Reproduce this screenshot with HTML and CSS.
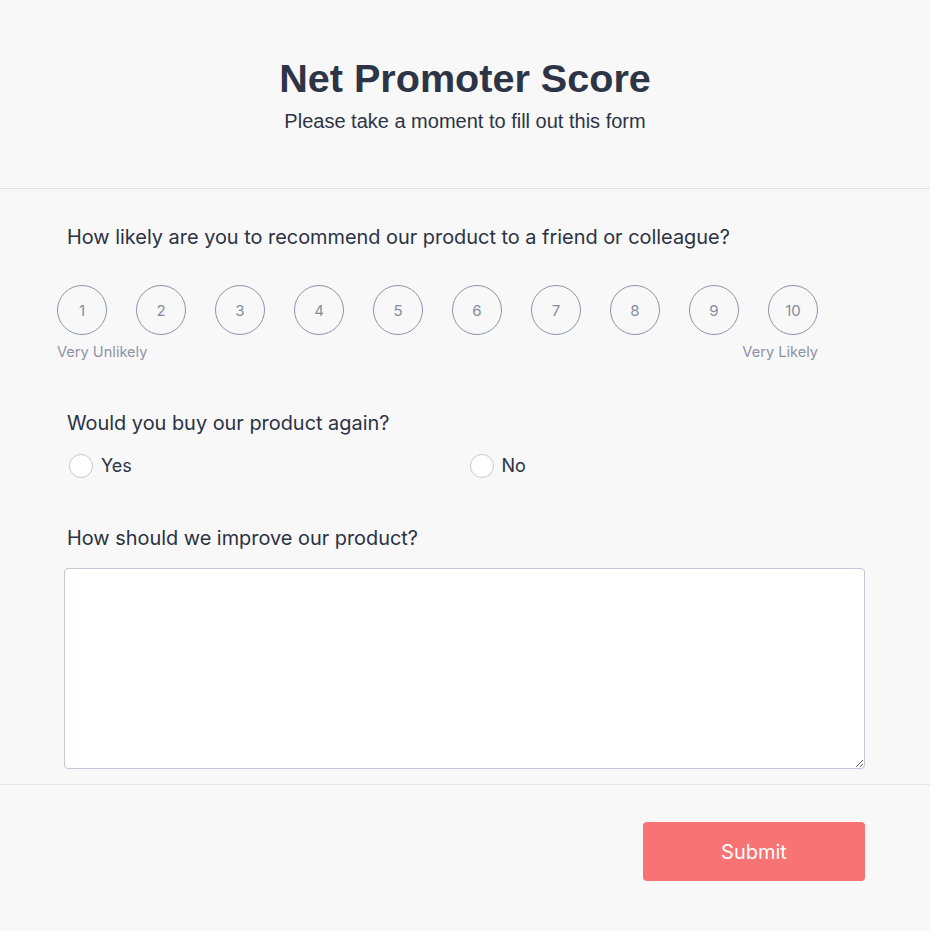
FILE: index.html
```html
<!DOCTYPE html>
<html lang="en">
<head>
  <meta charset="UTF-8">
  <meta name="viewport" content="width=device-width, initial-scale=1.0">
  <title>Net Promoter Score</title>
  <link rel="stylesheet" href="styles.css">
</head>
<body>
  <form class="survey" action="">
    <header class="survey-header">
      <h1>Net Promoter Score</h1>
      <p>Please take a moment to fill out this form</p>
    </header>

    <div class="survey-body">
      <div class="question question-nps">
        <label class="question-label">How likely are you to recommend our product to a friend or colleague?</label>
        <div class="scale">
          <button type="button" class="scale-item">1</button>
          <button type="button" class="scale-item">2</button>
          <button type="button" class="scale-item">3</button>
          <button type="button" class="scale-item">4</button>
          <button type="button" class="scale-item">5</button>
          <button type="button" class="scale-item">6</button>
          <button type="button" class="scale-item">7</button>
          <button type="button" class="scale-item">8</button>
          <button type="button" class="scale-item">9</button>
          <button type="button" class="scale-item">10</button>
        </div>
        <div class="scale-legend">
          <span>Very Unlikely</span>
          <span>Very Likely</span>
        </div>
      </div>

      <div class="question">
        <label class="question-label">Would you buy our product again?</label>
        <div class="choices">
          <label class="choice"><input type="radio" name="again" value="yes"> Yes</label>
          <label class="choice"><input type="radio" name="again" value="no"> No</label>
        </div>
      </div>

      <div class="question">
        <label class="question-label" for="improve">How should we improve our product?</label>
        <textarea id="improve" name="improve"></textarea>
      </div>
    </div>

    <footer class="survey-footer">
      <button type="submit" class="submit-btn">Submit</button>
    </footer>
  </form>
</body>
</html>
```

FILE: styles.css
```css
* {
  margin: 0px;
  padding: 0px;
  box-sizing: border-box;
}

body {
  background-color: #f8f8f8;
  font-family: Inter, "Noto Sans", sans-serif;
  color: #2d3446;
}

.survey-header {
  text-align: center;
  padding: 54px 0px 53px;
  border-bottom: 1px solid #dedfe3;
}

.survey-header h1 {
  font-family: "Liberation Sans", Arial, sans-serif;
  font-size: 39.6px;
  font-weight: 700;
  line-height: 48px;
}

.survey-header p {
  font-family: "Liberation Sans", Arial, sans-serif;
  font-size: 20px;
  line-height: 28px;
  margin-top: 5px;
}

.survey-body {
  padding: 34px 65px 15px 64px;
  border-bottom: 1px solid #e3e4e8;
}

.question {
  margin-bottom: 44px;
}

.question-nps {
  margin-bottom: 47px;
}

.question:last-child {
  margin-bottom: 0px;
}

.question-label {
  display: block;
  font-size: 19.9px;
  line-height: 28px;
  padding-left: 3px;
  color: #2b3244;
}

.scale {
  display: flex;
  gap: 29px;
  margin-top: 34px;
  margin-left: -7px;
}

.scale-item {
  width: 50px;
  height: 50px;
  border-radius: 50%;
  border: 1px solid #8e93a8;
  background: transparent;
  font-family: Inter, sans-serif;
  font-size: 15px;
  color: #858ca1;
  cursor: pointer;
}

.scale-legend {
  display: flex;
  justify-content: space-between;
  width: 761px;
  margin-left: -7px;
  margin-top: 7px;
  font-size: 14.6px;
  line-height: 20px;
  color: #8e93a6;
}

.choices {
  display: grid;
  grid-template-columns: 1fr 1fr;
  margin-top: 15px;
}

.choice {
  display: flex;
  align-items: center;
  gap: 8px;
  font-size: 18px;
  line-height: 28px;
  color: #2b3244;
  padding-left: 5px;
}

.choice input {
  appearance: none;
  width: 24px;
  height: 24px;
  border-radius: 50%;
  border: 1px solid #c6c8d0;
  background-color: #fff;
  margin: 0px;
}

textarea {
  display: block;
  width: 801px;
  height: 201px;
  margin-top: 16px;
  border: 1px solid #c3c6d6;
  border-radius: 4px;
  background-color: #fff;
  resize: vertical;
}

.survey-footer {
  display: flex;
  justify-content: flex-end;
  padding: 37px 65px 40px;
}

.submit-btn {
  width: 222px;
  height: 59px;
  border: none;
  border-radius: 4px;
  background-color: #f87373;
  color: #fff;
  font-family: Inter, sans-serif;
  font-size: 20px;
  cursor: pointer;
}
```
